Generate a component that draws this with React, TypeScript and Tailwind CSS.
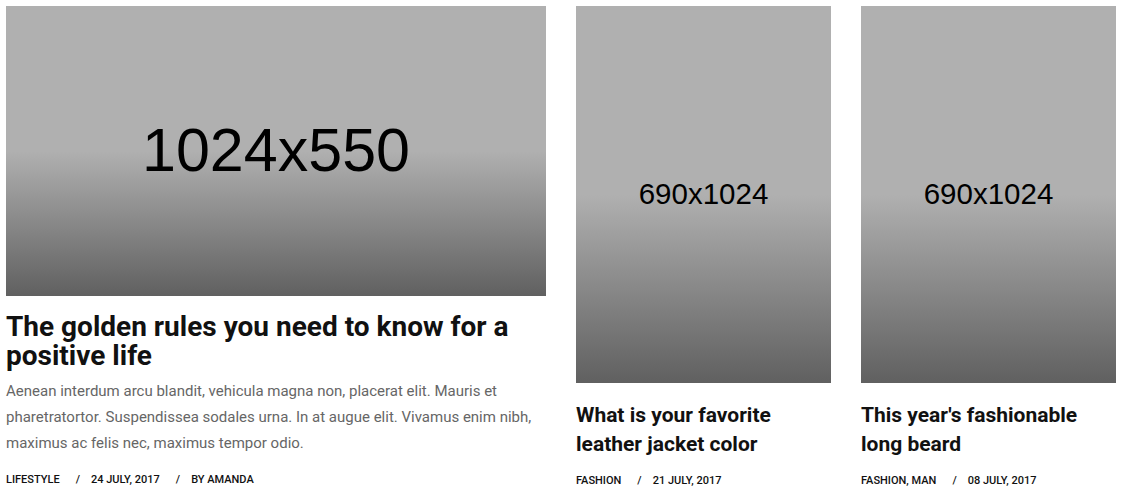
function Placeholder({ label, className, textClass }: { label: string; className: string; textClass: string }) {
  return (
    <div
      className={`${className} flex items-center justify-center bg-[linear-gradient(to_bottom,#b0b0b0_0%,#b0b0b0_50%,#606060_100%)]`}
    >
      <span className={`${textClass} text-black font-['Liberation_Sans',Arial,sans-serif]`}>{label}</span>
    </div>
  );
}

function Meta({ items }: { items: string[] }) {
  return (
    <div className="flex items-center text-[11px] font-medium uppercase text-[#111] leading-none">
      {items.map((item, i) => (
        <span key={i} className="flex items-center">
          {i > 0 && <span className="pl-[16px] pr-[11px]">/</span>}
          {item}
        </span>
      ))}
    </div>
  );
}

function SideCard({ title, meta }: { title: string; meta: string[] }) {
  return (
    <div className="w-[255px] flex flex-col">
      <Placeholder label="690x1024" className="h-[377px] w-full" textClass="text-[29.5px]" />
      <h3 className="mt-[18px] text-[21px] font-bold leading-[29px] text-[#111]">{title}</h3>
      <div className="mt-[16px]">
        <Meta items={meta} />
      </div>
    </div>
  );
}

export default function App() {
  return (
    <div className="w-[1122px] h-[504px] bg-white p-[6px] font-['Roboto',sans-serif] flex gap-[30px] overflow-hidden">
      <div className="w-[540px] flex flex-col">
        <Placeholder label="1024x550" className="h-[290px] w-full" textClass="text-[61px]" />
        <h2 className="mt-[16px] text-[28px] font-bold leading-[29px] text-[#111]">
          The golden rules you need to know for a positive life
        </h2>
        <p className="mt-[8px] text-[15px] leading-[26px] text-[#666]">
          Aenean interdum arcu blandit, vehicula magna non, placerat elit. Mauris et pharetratortor. Suspendissea
          sodales urna. In at augue elit. Vivamus enim nibh, maximus ac felis nec, maximus tempor odio.
        </p>
        <div className="mt-[18px]">
          <Meta items={["Lifestyle", "24 July, 2017", "By Amanda"]} />
        </div>
      </div>
      <SideCard title="What is your favorite leather jacket color" meta={["Fashion", "21 July, 2017"]} />
      <SideCard title="This year's fashionable long beard" meta={["Fashion, Man", "08 July, 2017"]} />
    </div>
  );
}
